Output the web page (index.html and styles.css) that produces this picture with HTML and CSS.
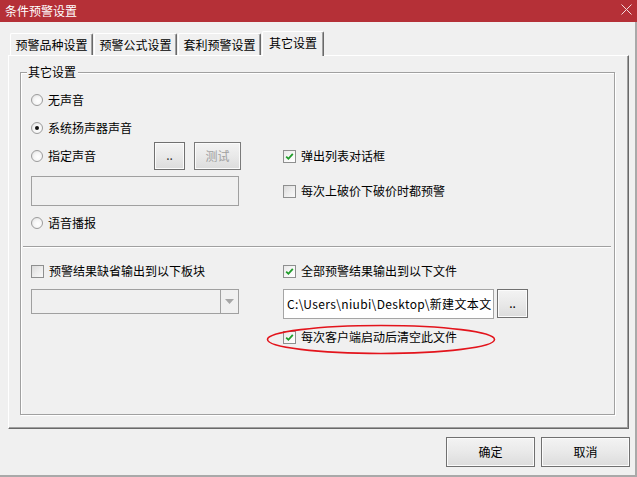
FILE: index.html
```html
<!DOCTYPE html>
<html lang="zh-CN">
<head>
<meta charset="utf-8">
<title>条件预警设置</title>
<link rel="stylesheet" href="styles.css">
</head>
<body>
<div class="window">
  <div class="titlebar">
    <span class="title">条件预警设置</span>
    <svg class="close" width="11" height="11" viewBox="0 0 11 11"><path d="M0.5 0.5 L10.5 10.5 M10.5 0.5 L0.5 10.5" stroke="#f4dcdd" stroke-width="1" fill="none"/></svg>
  </div>
  <div class="client">
    <div class="tabs">
      <div class="tab">预警品种设置</div>
      <div class="tab">预警公式设置</div>
      <div class="tab">套利预警设置</div>
      <div class="tab active">其它设置</div>
    </div>
    <div class="panel">
      <div class="group">
        <div class="legend">其它设置</div>
        <div class="row r1">
          <div class="opt"><span class="radio"></span><span>无声音</span></div>
        </div>
        <div class="row r2">
          <div class="opt"><span class="radio on"></span><span>系统扬声器声音</span></div>
        </div>
        <div class="row r3">
          <div class="left">
            <div class="opt lbl"><span class="radio"></span><span>指定声音</span></div>
            <div class="btn small">..</div>
            <div class="btn test disabled">测试</div>
          </div>
          <div class="opt"><span class="check on"><svg width="11" height="11" viewBox="0 0 11 11"><path d="M2.2 5.6 L4.4 7.8 L8.8 2.8" stroke="#1f9c2a" stroke-width="1.8" fill="none"/></svg></span><span>弹出列表对话框</span></div>
        </div>
        <div class="row r4">
          <div class="left"><div class="field"></div></div>
          <div class="opt"><span class="check"></span><span>每次上破价下破价时都预警</span></div>
        </div>
        <div class="row r5">
          <div class="opt"><span class="radio"></span><span>语音播报</span></div>
        </div>
        <div class="sep"></div>
        <div class="row r6">
          <div class="left">
            <div class="opt"><span class="check"></span><span>预警结果缺省输出到以下板块</span></div>
          </div>
          <div class="opt"><span class="check on"><svg width="11" height="11" viewBox="0 0 11 11"><path d="M2.2 5.6 L4.4 7.8 L8.8 2.8" stroke="#1f9c2a" stroke-width="1.8" fill="none"/></svg></span><span>全部预警结果输出到以下文件</span></div>
        </div>
        <div class="row r7">
          <div class="left">
            <div class="combo"><div class="combo-text"></div><div class="combo-arrow"><svg width="9" height="5" viewBox="0 0 9 5"><path d="M0 0 L9 0 L4.5 5 Z" fill="#a6a6a6"/></svg></div></div>
          </div>
          <div class="path">C:\Users\niubi\Desktop\新建文本文</div>
          <div class="btn browse">..</div>
        </div>
        <div class="row r8">
          <div class="left"></div>
          <div class="opt"><span class="check on"><svg width="11" height="11" viewBox="0 0 11 11"><path d="M2.2 5.6 L4.4 7.8 L8.8 2.8" stroke="#1f9c2a" stroke-width="1.8" fill="none"/></svg></span><span>每次客户端启动后清空此文件</span></div>
        </div>
      </div>
      <svg class="mark" width="230" height="31" viewBox="0 0 230 31"><ellipse cx="115" cy="15.5" rx="113.5" ry="14" stroke="#e3141c" stroke-width="1.6" fill="none"/></svg>
    </div>
    <div class="actions">
      <div class="btn big">确定</div>
      <div class="btn big">取消</div>
    </div>
  </div>
</div>
</body>
</html>
```
FILE: styles.css
```css
* { box-sizing: border-box; }
html, body { margin: 0; padding: 0; }
body {
  width: 637px;
  height: 477px;
  overflow: hidden;
  background: #f0f0f0;
  font-family: "Noto Sans CJK SC", "Microsoft YaHei", sans-serif;
  font-size: 12px;
  color: #000;
}
.window { width: 637px; height: 477px; display: flex; flex-direction: column; }
.titlebar {
  height: 22px;
  flex: none;
  background: #b53037;
  display: flex;
  align-items: center;
  justify-content: space-between;
  padding: 0 5px 0 5px;
}
.title { color: #fff; line-height: 16px; margin-top: -1px; }
.close { margin-top: -3px; margin-right: 0; }

.client {
  flex: 1;
  border-right: 2px solid #a9a9a9;
  border-bottom: 2px solid #a9a9a9;
  padding: 9px 5px 0 8px;
  display: flex;
  flex-direction: column;
}
.tabs {
  height: 24px;
  display: flex;
  align-items: flex-end;
  gap: 1px;
  padding-left: 2px;
}
.tab {
  width: 83px;
  height: 22px;
  border-top: 1px solid #fff;
  border-left: 1px solid #fff;
  border-right: 1px solid #696969;
  box-shadow: inset -1px 0 0 #a0a0a0;
  border-radius: 2px 2px 0 0;
  text-align: center;
  line-height: 19px;
  padding-top: 1px;
}
.tab.active {
  width: 62px;
  height: 25px;
  margin-bottom: -1px;
  position: relative;
  z-index: 1;
  background: #f0f0f0;
  line-height: 19px;
  padding-top: 1px;
}
.panel {
  width: 621px;
  height: 374px;
  flex: none;
  position: relative;
  border-top: 1px solid #fff;
  border-left: 1px solid #fff;
  border-right: 1px solid #696969;
  border-bottom: 1px solid #696969;
  box-shadow: inset -1px -1px 0 #a0a0a0;
  padding: 16px 0 0 11px;
}
.group {
  width: 595px;
  height: 343px;
  border: 1px solid #a0a0a0;
  box-shadow: inset 1px 1px 0 #fff, 1px 1px 0 #fff;
  padding: 0 3px 0 10px;
}
.legend {
  width: fit-content;
  margin: -9px 0 0 -4px;
  padding: 0 2px 0 1px;
  line-height: 16px;
  background: #f0f0f0;
  position: relative;
}
.row { display: flex; align-items: center; }
.r1 { margin-top: 10px; height: 20px; }
.r2 { margin-top: 8px; height: 20px; }
.r3 { margin-top: 4px; height: 28px; }
.r4 { margin-top: 6px; height: 30px; }
.r5 { margin-top: 7px; height: 20px; }
.sep {
  margin: 13px 0 0 -8px;
  width: 588px;
  height: 2px;
  border-top: 1px solid #a0a0a0;
  border-bottom: 1px solid #fff;
}
.r6 { margin-top: 13px; height: 20px; }
.r7 { margin-top: 8px; height: 30px; align-items: flex-start; }
.r8 { margin-top: 8px; height: 20px; }

.left { width: 252px; flex: none; display: flex; align-items: center; }
.opt { display: flex; align-items: center; gap: 5px; line-height: 16px; white-space: nowrap; }
.lbl { width: 123px; }

.radio {
  width: 12px; height: 12px; flex: none;
  border: 1px solid #9c9c9c;
  border-radius: 50%;
  background: radial-gradient(circle at 60% 60%, #ffffff 0, #f6f6f6 45%, #d9d9d9 100%);
  display: flex; align-items: center; justify-content: center;
}
.radio.on::after {
  content: "";
  width: 4px; height: 4px;
  border-radius: 50%;
  background: #111;
}
.check {
  width: 13px; height: 13px; flex: none;
  border: 1px solid #8e8f8f;
  background: linear-gradient(135deg, #dadada 0%, #ececec 50%, #f9f9f9 100%);
  display: flex; align-items: center; justify-content: center;
}
.check.on { background: linear-gradient(135deg, #e8e8e8 0%, #f7f7f7 50%, #ffffff 100%); }
.check svg { display: block; }

.btn {
  border: 1px solid #707070;
  background: linear-gradient(#f3f3f3, #e9e9e9 50%, #dcdcdc);
  box-shadow: inset 0 0 0 1px #fbfbfb;
  display: flex; align-items: center; justify-content: center;
  line-height: 16px;
}
.small { width: 31px; height: 28px; color: #333; padding-bottom: 2px; }
.test { width: 47px; height: 28px; margin-left: 9px; }
.disabled { color: #a0a0a0; border-color: #7a7a7a; }
.browse { width: 31px; height: 29px; margin-left: 3px; padding-bottom: 2px; }
.big { width: 89px; height: 30px; }

.field {
  width: 208px; height: 30px;
  border: 1px solid #a0a0a0;
  background: #f0f0f0;
}
.combo {
  width: 208px; height: 25px;
  border: 1px solid #a0a0a0;
  background: #f0f0f0;
  display: flex;
}
.combo-text { flex: 1; }
.combo-arrow {
  width: 18px;
  border-left: 1px solid #a0a0a0;
  display: flex; align-items: center; justify-content: center;
}
.path {
  width: 211px; height: 30px;
  border: 1px solid #a5a5a5;
  background: #fff;
  padding: 0 0 0 3px;
  line-height: 27px;
  white-space: nowrap;
  overflow: hidden;
  letter-spacing: 0.35px;
}
.mark { position: absolute; left: 257px; top: 268px; }

.actions {
  margin-top: 8px;
  display: flex;
  justify-content: flex-end;
  gap: 6px;
}
```
